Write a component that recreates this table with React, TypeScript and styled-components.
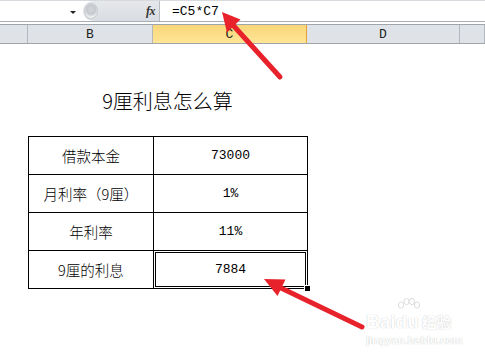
import React from "react";
import styled, { createGlobalStyle } from "styled-components";

const GlobalStyle = createGlobalStyle`
  html, body { margin: 0; padding: 0; background: #ffffff; overflow: hidden; }
  #root { width: 485px; height: 357px; position: relative; }
`;

const Page = styled.div`
  width: 485px;
  height: 357px;
  position: relative;
  background: #fff;
  font-family: "Noto Sans CJK SC", "Noto Sans", sans-serif;
`;

const FormulaBar = styled.div`
  display: flex;
  border-top: 1px solid #d6d9dd;
  border-bottom: 1px solid #a9aeb5;
  box-sizing: border-box;
  height: 22px;
`;

const NameBox = styled.div`
  width: 83px;
  display: flex;
  align-items: center;
  justify-content: flex-end;
  padding-right: 7px;
  box-sizing: border-box;
  background: #fff;
`;

const DropTriangle = styled.div`
  width: 0;
  height: 0;
  border-left: 3px solid transparent;
  border-right: 3px solid transparent;
  border-top: 3px solid #222;
  margin-top: 2px;
`;

const ButtonStrip = styled.div`
  width: 76px;
  display: flex;
  align-items: center;
  justify-content: space-between;
  background: linear-gradient(#e6e8eb, #d9dce1);
  border-radius: 10px 0 0 10px;
  box-sizing: border-box;
  padding: 0 4px 0 1px;
`;

const Knob = styled.div`
  width: 14px;
  height: 16px;
  border-radius: 50%;
  background: radial-gradient(circle at 50% 40%, #d2d5d9 0, #c6c9ce 45%, #eef0f2 70%, #f6f7f8 100%);
  border: 1px solid #c9ccd1;
  box-sizing: border-box;
`;

const FxLabel = styled.span`
  font-family: "Liberation Serif", serif;
  font-style: italic;
  font-weight: bold;
  font-size: 12px;
  color: #333;
  letter-spacing: -0.5px;
`;

const FormulaInput = styled.div`
  flex: 1;
  border-left: 1px solid #b8bcc2;
  background: #fff;
  display: flex;
  align-items: center;
  padding-left: 12px;
  font-family: "Liberation Mono", monospace;
  font-size: 13px;
  color: #000;
`;

const HeaderRow = styled.div`
  margin-top: 2px;
  display: grid;
  grid-template-columns: 28px 125px 154px 153px 25px;
  height: 20px;
  border-top: 1px solid #9fa5ac;
  border-bottom: 1px solid #9fa5ac;
  box-sizing: border-box;
  background: #dfe3e8;
`;

const HeaderCell = styled.div<{ $active?: boolean }>`
  display: flex;
  align-items: center;
  justify-content: center;
  border-right: 1px solid ${(p) => (p.$active ? "#e3a338" : "#b3b8be")};
  background: ${(p) => (p.$active ? "linear-gradient(#f9d77a, #ffe596)" : "transparent")};
  font-family: "Liberation Mono", monospace;
  font-size: 13px;
  color: #222;
  box-sizing: border-box;
  padding-top: 1px;
`;

const Sheet = styled.div`
  padding-left: 28px;
`;

const Title = styled.div`
  width: 279px;
  margin-top: 44px;
  text-align: center;
  font-size: 20px;
  font-weight: 300;
  line-height: 26px;
  color: #000;
`;

const DataTable = styled.table`
  margin-top: 22px;
  border-collapse: collapse;
  width: 279px;
  table-layout: fixed;
`;

const Cell = styled.td<{ $label?: boolean; $selected?: boolean }>`
  border: 1px solid #000;
  height: 37px;
  padding: 0;
  text-align: center;
  vertical-align: middle;
  position: relative;
  font-family: ${(p) =>
    p.$label ? `"Noto Sans CJK SC", sans-serif` : `"Liberation Mono", monospace`};
  font-size: ${(p) => (p.$label ? "14.5px" : "13px")};
  font-weight: ${(p) => (p.$label ? 300 : 400)};
  color: #000;
  box-shadow: ${(p) => (p.$selected ? "inset 0 0 0 1px #fff, inset 0 0 0 2px #000" : "none")};
`;

const FillHandle = styled.div`
  position: absolute;
  right: -4px;
  bottom: -4px;
  width: 5px;
  height: 5px;
  background: #000;
  border: 1px solid #fff;
`;

const Overlay = styled.svg`
  position: absolute;
  left: 0;
  top: 0;
  pointer-events: none;
`;

const Watermark = styled.div`
  position: absolute;
  left: 366px;
  top: 302px;
  width: 92px;
  color: #fff;
  text-shadow: 0 0 1px #cfcfcf, 0 0 1px #d8d8d8;
`;

const WmMain = styled.div`
  display: flex;
  align-items: flex-end;
  font-family: "Liberation Sans", sans-serif;
  font-weight: bold;
  font-size: 19px;
  line-height: 20px;
  height: 30px;
`;

const WmCn = styled.span`
  font-family: "Noto Sans CJK SC", sans-serif;
  font-size: 15px;
  line-height: 20px;
  margin-left: 3px;
`;

const WmUrl = styled.div`
  font-family: "Liberation Sans", sans-serif;
  font-size: 11px;
  font-weight: bold;
  line-height: 14px;
  margin-top: 1px;
`;

const Du = styled.span`
  position: relative;
`;

const Paw = styled.svg`
  position: absolute;
  left: 1px;
  top: -14px;
`;

const rows = [
  { label: "借款本金", value: "73000" },
  { label: "月利率（9厘）", value: "1%" },
  { label: "年利率", value: "11%" },
  { label: "9厘的利息", value: "7884", selected: true },
];

export default function App() {
  return (
    <Page>
      <GlobalStyle />
      <FormulaBar>
        <NameBox>
          <DropTriangle />
        </NameBox>
        <ButtonStrip>
          <Knob />
          <FxLabel>fx</FxLabel>
        </ButtonStrip>
        <FormulaInput>=C5*C7</FormulaInput>
      </FormulaBar>
      <HeaderRow>
        <HeaderCell />
        <HeaderCell>B</HeaderCell>
        <HeaderCell $active>C</HeaderCell>
        <HeaderCell>D</HeaderCell>
        <HeaderCell />
      </HeaderRow>
      <Sheet>
        <Title>9厘利息怎么算</Title>
        <DataTable>
          <colgroup>
            <col style={{ width: 125 }} />
            <col style={{ width: 154 }} />
          </colgroup>
          <tbody>
            {rows.map((r) => (
              <tr key={r.label}>
                <Cell $label>{r.label}</Cell>
                <Cell $selected={r.selected}>
                  {r.value}
                  {r.selected && <FillHandle />}
                </Cell>
              </tr>
            ))}
          </tbody>
        </DataTable>
      </Sheet>

      <Watermark>
        <WmMain>
          Bai
          <Du>
            <Paw width="24" height="16" viewBox="0 0 24 16">
              <g fill="#fff" stroke="#d4d4d4" strokeWidth="0.8">
                <ellipse cx="4" cy="7" rx="2.6" ry="3.2" />
                <ellipse cx="9.5" cy="3.5" rx="2.6" ry="3.2" />
                <ellipse cx="15" cy="3.5" rx="2.6" ry="3.2" />
                <ellipse cx="20" cy="7" rx="2.6" ry="3.2" />
              </g>
            </Paw>
            du
          </Du>
          <WmCn>经验</WmCn>
        </WmMain>
        <WmUrl>jingyan.baidu.com</WmUrl>
      </Watermark>

      <Overlay width="485" height="357" viewBox="0 0 485 357">
        <g stroke="#e8222b" strokeWidth="5" strokeLinecap="round" fill="#e8222b">
          <line x1="280" y1="77" x2="232" y2="24" />
          <line x1="362" y1="327" x2="281" y2="288" />
        </g>
        <g fill="#e8222b">
          <polygon points="222,12 240.5,19.5 227,32.5" />
          <polygon points="264,279 285.5,279.5 277.5,296" />
        </g>
      </Overlay>
    </Page>
  );
}
